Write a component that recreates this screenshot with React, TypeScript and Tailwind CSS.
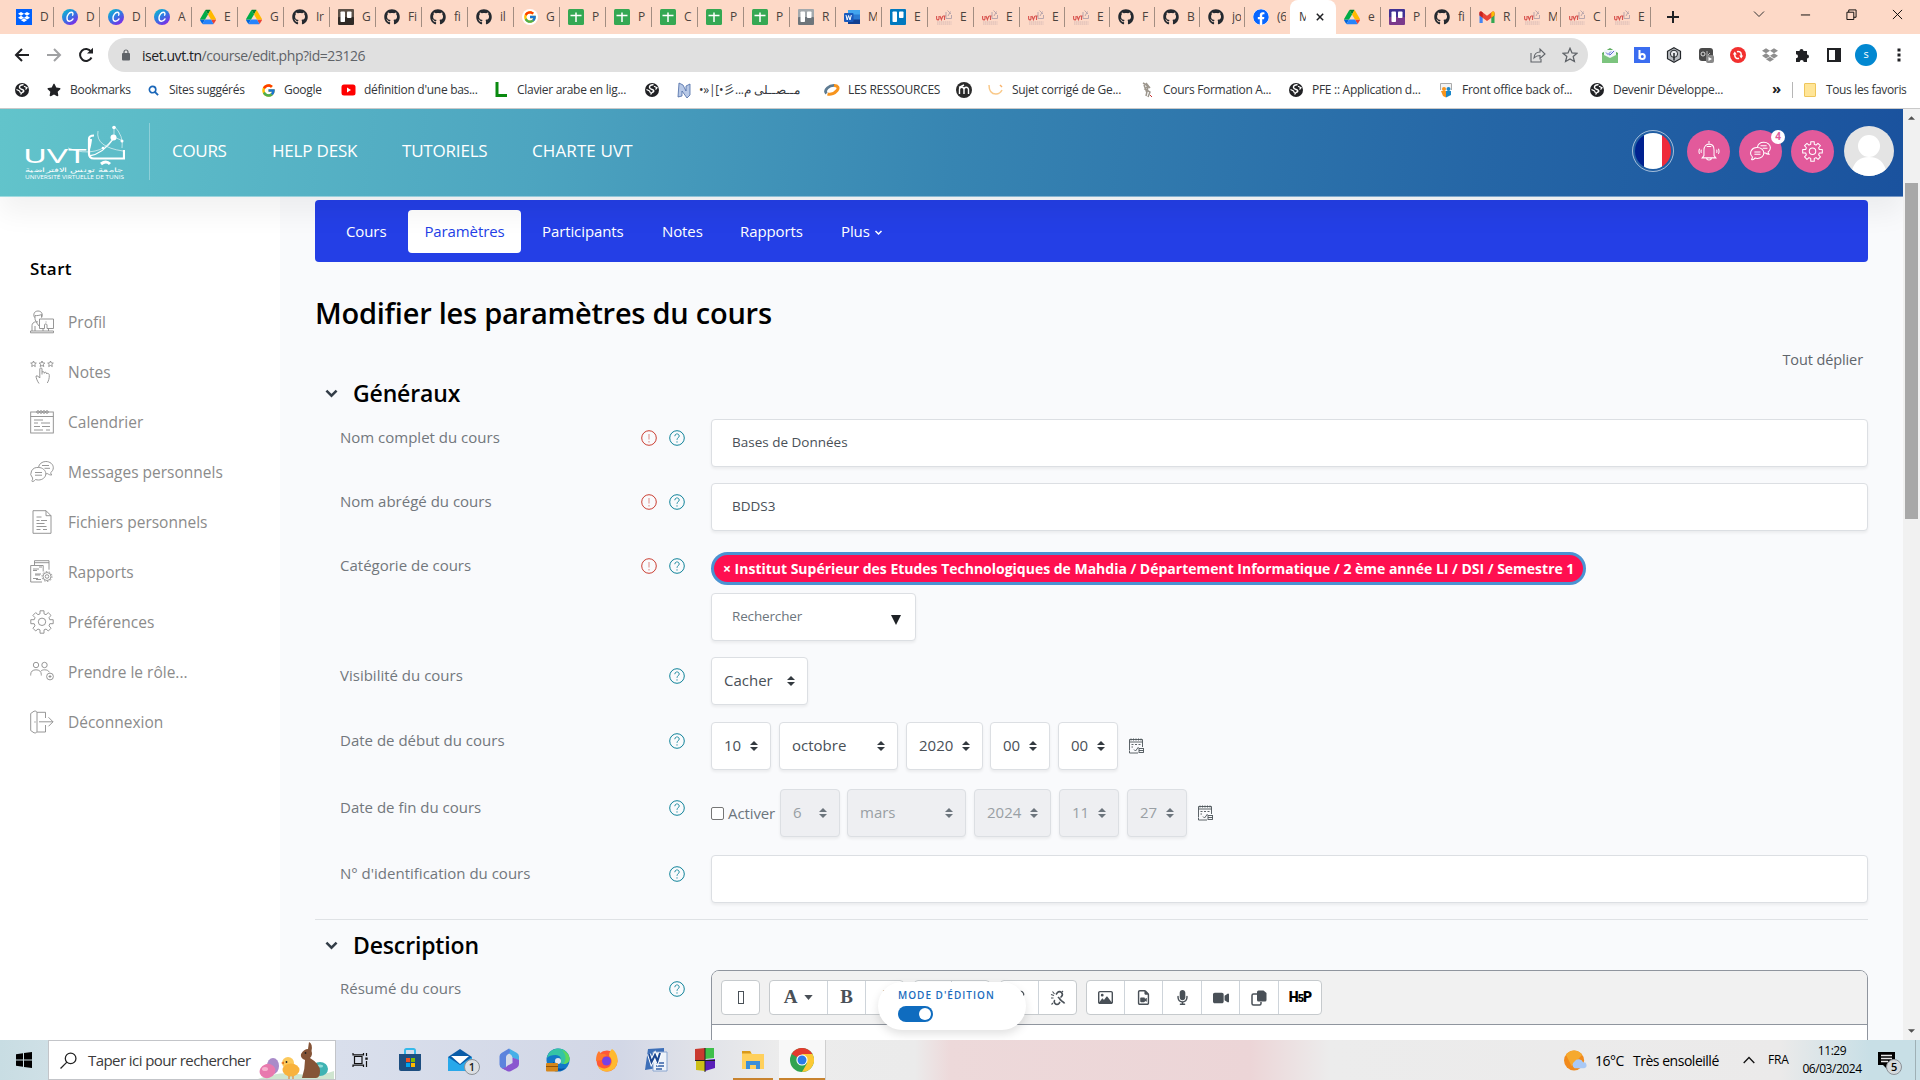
import React from "react";
import { FcGoogle } from "react-icons/fc";
import { FaGithub, FaDropbox, FaFacebook, FaStar, FaPuzzlePiece } from "react-icons/fa";
import { FaRegImage, FaRegFileVideo, FaMicrophone, FaVideo } from "react-icons/fa6";

/* ---------- favicons ---------- */
const Dropbox = () => (
  <span className="flex size-4 items-center justify-center bg-[#0061fe]">
    <FaDropbox className="size-3 text-white" />
  </span>
);
const Canva = () => (
  <svg viewBox="0 0 16 16" className="size-4">
    <defs>
      <linearGradient id="cv" x1="0" y1="0" x2="0.7" y2="1">
        <stop offset="0" stopColor="#08c3cc" />
        <stop offset="0.5" stopColor="#2c7fe0" />
        <stop offset="1" stopColor="#7d2ae8" />
      </linearGradient>
    </defs>
    <circle cx="8" cy="8" r="8" fill="url(#cv)" />
    <path d="M10.600 6.200c.9-1.800.1-2.900-1.300-2.900-2.100 0-4.300 3-4.300 5.700 0 2.100 1 3.300 2.500 3.300 1.300 0 2.700-1 3.500-2.400" fill="none" stroke="#fff" strokeWidth="1.400" strokeLinecap="round" />
  </svg>
);
const Drive = () => (
  <svg viewBox="0 0 87 78" className="size-4">
    <path d="M6.600 66.900 10.400 73.400c.8 1.400 1.900 2.500 3.300 3.300L27.500 53H0c0 1.500.4 3.100 1.200 4.500z" fill="#0066da" />
    <path d="M43.600 25 29.900 1.200c-1.300.8-2.500 1.900-3.300 3.300L1.200 48.500C.4 49.900 0 51.400 0 53h27.500z" fill="#00ac47" />
    <path d="M73.500 76.800c1.400-.8 2.500-1.900 3.300-3.300l1.600-2.800L86.100 57.500c.8-1.400 1.200-3 1.200-4.500H59.800l5.900 11.500z" fill="#ea4335" />
    <path d="M43.600 25 57.400 1.200C56 .4 54.400 0 52.900 0H34.400c-1.600 0-3.200.5-4.500 1.200z" fill="#00832d" />
    <path d="M59.800 53H27.500L13.700 76.800c1.400.8 2.900 1.200 4.500 1.200h50.900c1.600 0 3.200-.5 4.500-1.200z" fill="#2684fc" />
    <path d="M73.400 26.500 60.700 4.500c-.8-1.400-2-2.500-3.300-3.300L43.600 25l16.200 28h27.500c0-1.600-.4-3.100-1.200-4.500z" fill="#ffba00" />
  </svg>
);
const Github = () => <FaGithub className="size-4 text-[#24292f]" />;
const Google = () => (
  <span className="flex size-4 items-center justify-center rounded-full bg-white">
    <FcGoogle className="size-[14px]" />
  </span>
);
const Sheet = () => (
  <svg viewBox="0 0 16 16" className="size-4">
    <rect width="16" height="16" rx="1.500" fill="#34a853" />
    <path d="M8 3.500V13M2.500 6.500h11" stroke="#fff" strokeWidth="1.500" />
  </svg>
);
const Board = ({ a, b }: { a: string; b: string }) => (
  <svg viewBox="0 0 16 16" className="size-4">
    <rect width="16" height="10" rx="1" fill={a} />
    <rect y="8" width="16" height="8" rx="1" fill={b} />
    <rect x="2.500" y="2.500" width="4.500" height="10.500" rx=".8" fill="#fff" />
    <rect x="9" y="2.500" width="4.500" height="6.500" rx=".8" fill="#fff" />
  </svg>
);
const Word = () => (
  <svg viewBox="0 0 16 16" className="size-4">
    <rect x="4" y="1" width="12" height="14" rx="1" fill="#2b7cd3" />
    <rect x="4" y="1" width="12" height="4.500" fill="#41a5ee" />
    <rect x="4" y="10.500" width="12" height="4.500" fill="#103f91" />
    <rect y="4" width="9.500" height="9" rx="1" fill="#185abd" />
    <path d="M2 6l1.200 5 1.400-4.500L6 11l1.300-5" fill="none" stroke="#fff" strokeWidth="1" />
  </svg>
);
const Uvt = () => (
  <svg viewBox="0 0 16 16" className="size-4">
    <path d="M.6 7v2.600q0 1.300 1.200 1.300T3 9.600V7M4 7l1.400 3.700L6.800 7M7 7h3M8.500 7v4" fill="none" stroke="#d9544f" strokeWidth="1.100" />
    <path d="M10 3v6.500h5.500V6M12 7l2.500-4.500M11.500 1.500 15 5" fill="none" stroke="#b9a6ac" strokeWidth="1" />
    <path d="M1 13h14.500M1 15h14.500" stroke="#c9b0b0" strokeWidth=".8" strokeDasharray="1.500 .5" />
  </svg>
);
const Gmail = () => (
  <svg viewBox="0 0 16 16" className="size-4">
    <path d="M.5 4v10h3.200V7z" fill="#4285f4" />
    <path d="M15.500 4v10h-3.200V7z" fill="#34a853" />
    <path d="M.5 4.500v2L8 12l7.500-5.500V3.800c0-1.300-1.300-1.800-2.300-1L8 6.700 2.800 2.800C1.800 2 .5 2.500.5 3.800z" fill="#ea4335" />
    <path d="M12.300 3.500v5l3.200-2.300V3.800c0-1.300-1.300-1.800-2.300-1z" fill="#fbbc04" />
    <path d="M.5 4v2.200l3.200 2.300v-5L2.800 2.800C1.800 2 .5 2.500.5 3.800z" fill="#c5221f" />
  </svg>
);
const Facebook = () => <FaFacebook className="size-4 rounded-full bg-white text-[#0866ff]" />;

const icons = {
  dropbox: <Dropbox />,
  canva: <Canva />,
  drive: <Drive />,
  github: <Github />,
  google: <Google />,
  sheet: <Sheet />,
  boardDark: <Board a="#5c5148" b="#2f2a26" />,
  boardGray: <Board a="#a3a9ad" b="#6d757b" />,
  boardBlue: <Board a="#0079bf" b="#0079bf" />,
  boardPurple: <Board a="#403294" b="#7a3a8c" />,
  word: <Word />,
  uvt: <Uvt />,
  gmail: <Gmail />,
  facebook: <Facebook />,
};
type IconName = keyof typeof icons;

const tabsA: [IconName, string][] = [
  ["dropbox", "D"], ["canva", "D"], ["canva", "D"], ["canva", "A"], ["drive", "E"], ["drive", "G"],
  ["github", "Ir"], ["boardDark", "G"], ["github", "Fi"], ["github", "fi"], ["github", "il"],
  ["google", "G"], ["sheet", "P"], ["sheet", "P"], ["sheet", "C"], ["sheet", "P"], ["sheet", "P"],
  ["boardGray", "R"], ["word", "M"], ["boardBlue", "E"], ["uvt", "E"], ["uvt", "E"],
];
const tabsB: [IconName, string][] = [
  ["uvt", "E"], ["uvt", "E"], ["github", "F"], ["github", "B"], ["github", "jo"], ["facebook", "(6"],
];
const tabsC: [IconName, string][] = [
  ["drive", "e"], ["boardPurple", "P"], ["github", "fi"], ["gmail", "R"], ["uvt", "M"], ["uvt", "C"], ["uvt", "E"],
];

const Tab = ({ icon, label, narrow, last }: { icon: IconName; label: string; narrow?: boolean; last?: boolean }) => (
  <div className={"flex h-[20px] shrink-0 items-center pl-[8px] " + (narrow ? "w-[45px] " : "w-[46px] ") + (last ? "" : "border-r border-[#a28d81]")}>
    {icons[icon]}
    <span className="ml-[8px] w-[9px] overflow-hidden text-[12px] tracking-[-0.3px] whitespace-nowrap text-[#4b423d]">{label}</span>
  </div>
);

const TabStrip = () => (
  <div className="flex h-[34px] items-center bg-[#fdd9c7] pl-[8px]">
    {tabsA.map(([i, l], k) => <Tab key={k} icon={i} label={l} />)}
    {tabsB.map(([i, l], k) => <Tab key={k} icon={i} label={l} narrow last={k === 5} />)}
    <div className="flex h-[34px] w-[46px] items-center rounded-t-[8px] bg-white pl-[9px]">
      <span className="w-[7px] overflow-hidden text-[12px] text-[#3c3c3c]">M</span>
      <svg viewBox="0 0 8 8" className="ml-[10px] size-[8px]"><path d="M.8.8l6.400 6.400M7.200.8.8 7.200" stroke="#202124" strokeWidth="1.500" /></svg>
    </div>
    {tabsC.map(([i, l], k) => <Tab key={k} icon={i} label={l} narrow />)}
    <svg viewBox="0 0 14 14" className="ml-[15px] size-[14px]"><path d="M7 1v12M1 7h12" stroke="#202124" strokeWidth="2" /></svg>
    <div className="mb-[6px] ml-auto flex items-center gap-[35px] pr-[17px]">
      <svg viewBox="0 0 12 12" className="size-[12px]"><path d="M1 3.500l5 5 5-5" fill="none" stroke="#333" /></svg>
      <svg viewBox="0 0 12 12" className="size-[11px]"><path d="M1 6.500h10" stroke="#000" /></svg>
      <svg viewBox="0 0 12 12" className="size-[11px]"><path d="M1 3.500h7.500v8H1zM3 3.500V1h8v8H8.500" fill="none" stroke="#000" /></svg>
      <svg viewBox="0 0 12 12" className="size-[11px]"><path d="M1 1l10 10M11 1L1 11" stroke="#000" /></svg>
    </div>
  </div>
);

/* ---------- toolbar ---------- */
const Toolbar = () => (
  <div className="flex h-[42px] items-center pl-[14px]">
    <svg viewBox="0 0 16 16" className="size-[16px]"><path d="M15 8H2M8 2L2 8l6 6" fill="none" stroke="#202124" strokeWidth="2" /></svg>
    <svg viewBox="0 0 16 16" className="ml-[16px] size-[16px]"><path d="M1 8h13M8 2l6 6-6 6" fill="none" stroke="#a0a1a3" strokeWidth="2" /></svg>
    <svg viewBox="0 0 16 16" className="ml-[16px] size-[16px]"><path d="M13.500 10.500A6 6 0 1 1 13 4.500" fill="none" stroke="#202124" strokeWidth="2" /><path d="M9 6.500h6V.8z" fill="#202124" /></svg>
    <div className="ml-[14px] flex h-[34px] w-[1480px] items-center rounded-full bg-[#e0e0e0] pl-[13px]">
      <svg viewBox="0 0 10 12" className="h-[12px] w-[10px]"><rect x="1" y="4" width="8" height="7.500" rx="1" fill="#5f6368" /><path d="M3 5V3a2 2 0 0 1 4 0v2" fill="none" stroke="#5f6368" strokeWidth="1.200" /></svg>
      <span className="ml-[11px] text-[14px] tracking-[-0.45px] text-[#5f6368]"><span className="text-[#202124]">iset.uvt.tn</span>/course/edit.php?id=23126</span>
      <div className="ml-auto flex gap-[16px] pr-[10px]">
        <svg viewBox="0 0 16 16" className="size-[16px]"><path d="M1 6v9h10v-3M4 11c.3-4 3-6 6-6V2l5 5-5 4.500V8.500c-3 0-4.500.8-6 2.500z" fill="none" stroke="#5f6368" strokeWidth="1.100" /></svg>
        <svg viewBox="0 0 16 16" className="size-[16px]"><path d="M8 1.300l2 4.600 5 .4-3.800 3.300 1.200 4.900L8 11.900l-4.400 2.600 1.200-4.900L1 6.300l5-.4z" fill="none" stroke="#5f6368" strokeWidth="1.300" /></svg>
      </div>
    </div>
    <div className="ml-[14px] flex items-center gap-[16px]">
      <svg viewBox="0 0 16 16" className="size-[16px]"><path d="M0 6l8-5 8 5v9H0z" fill="#5fae61" /><path d="M2 3h12v6l-6 3-6-3z" fill="#f1f5f9" /><path d="M4 5.500l2 2 3-3M7 7.500l1 .500 4-4" fill="none" stroke="#5a63d8" /><path d="M0 7l8 4 8-4v9H0z" fill="#7cc47e" /></svg>
      <svg viewBox="0 0 16 16" className="size-[16px]"><rect width="16" height="16" fill="#3b6df0" /><path d="M5.500 3v9" stroke="#fff" strokeWidth="2" /><circle cx="8.300" cy="9.500" r="2.500" fill="none" stroke="#fff" strokeWidth="2" /></svg>
      <svg viewBox="0 0 16 16" className="size-[16px]"><path d="M8 .7l6.500 3.600v7.400L8 15.300 1.500 11.700V4.300z" fill="#b8bcc0" stroke="#22262a" strokeWidth="1.200" /><circle cx="8" cy="6.800" r="3.600" fill="#e8eaed" stroke="#22262a" /><path d="M8 6v7.500" stroke="#22262a" strokeWidth="1.500" /></svg>
      <svg viewBox="0 0 16 16" className="size-[16px]"><rect x="1" y="1" width="14" height="13" rx="3" fill="#4a4a4a" /><circle cx="5" cy="7" r="2" fill="none" stroke="#ddd" /><path d="M9 4v5l3-3" stroke="#bbb" fill="none" /><rect x="8" y="8" width="8" height="8" rx="2" fill="#888" /><path d="M10.500 10l3.500 2-3.500 2z" fill="#fff" /></svg>
      <svg viewBox="0 0 16 16" className="size-[16px]"><circle cx="8" cy="8" r="8" fill="#f2302f" /><path d="M4.800 7v1.500a3 3 0 0 0 4.200 2.800M11.200 9V7.500A3 3 0 0 0 7 4.700" fill="none" stroke="#fff" strokeWidth="1.500" /><path d="M2.800 7.500l2-3 2 3zM9.200 8.500l2 3 2-3z" fill="#fff" /></svg>
      <FaDropbox className="size-[16px] text-[#8e8e8e]" />
      <svg viewBox="0 0 16 16" className="size-[16px]"><path d="M2 4h3.500a2 2 0 1 1 4 0H13v3.500a2 2 0 1 1 0 4V15H9.700a2 2 0 1 0-4 0H2v-3.700a2 2 0 1 0 0-4z" fill="#202124" /></svg>
      <svg viewBox="0 0 16 16" className="size-[16px]"><rect x="2" y="2" width="12" height="12" fill="none" stroke="#202124" strokeWidth="2" /><rect x="9" y="2" width="5" height="12" fill="#202124" /></svg>
      <span className="-ml-[3px] flex size-[22px] items-center justify-center rounded-full bg-[#0288d1] pb-px text-[11px] text-white">s</span>
      <svg viewBox="0 0 4 14" className="ml-[4px] h-[14px] w-[4px]"><path d="M.5.5h3v3h-3zM.5 5.500h3v3h-3zM.5 10.500h3v3h-3z" fill="#202124" /></svg>
    </div>
  </div>
);

/* ---------- bookmarks ---------- */
const Globe = () => (
  <svg viewBox="0 0 14 14" className="size-[14px]">
    <circle cx="7" cy="7" r="7" fill="#202124" />
    <path d="M8.500 1.800C6 1.500 4.300 3 4.500 4.500S7 6.300 8 6.800s1 1.700 0 2.200-2 .8-2.200 2.500" fill="none" stroke="#fff" strokeWidth="1.500" />
    <path d="M1.500 6.500l3 1.500 1 2M9 3.300l3 1.500-1.500 1.700" fill="none" stroke="#fff" strokeWidth="1.200" />
  </svg>
);
const Mark = ({ w, icon, children }: { w: string; icon: React.ReactNode; children?: React.ReactNode }) => (
  <div className={"flex shrink-0 items-center " + w}>
    <span className="flex w-[16px] shrink-0 justify-center">{icon}</span>
    <span className="ml-[8px] text-[12px] tracking-[-0.29px] whitespace-nowrap text-[#33363a]">{children}</span>
  </div>
);
const Bookmarks = () => (
  <div className="flex h-[28px] items-center pl-[14px]">
    <Mark w="w-[32px]" icon={<Globe />} />
    <Mark w="w-[99px]" icon={<FaStar className="size-[14px] text-[#202124]" />}>Bookmarks</Mark>
    <Mark w="w-[115px]" icon={<svg viewBox="0 0 12 12" className="size-[11px]"><circle cx="5" cy="5" r="3.500" fill="none" stroke="#1a66b8" strokeWidth="1.800" /><path d="M7.500 7.500L11 11" stroke="#1a66b8" strokeWidth="2" /></svg>}>Sites suggérés</Mark>
    <Mark w="w-[80px]" icon={<FcGoogle className="size-[15px]" />}>Google</Mark>
    <Mark w="w-[153px]" icon={<svg viewBox="0 0 14 12" className="h-[12px] w-[15px]"><rect width="14" height="11" y=".5" rx="2.500" fill="#f00" /><path d="M5.500 3.500v5l4-2.500z" fill="#fff" /></svg>}>définition d&apos;une bas...</Mark>
    <Mark w="w-[151px]" icon={<svg viewBox="0 0 12 16" className="h-[16px] w-[12px]"><path d="M2 0v13.500h10" fill="none" stroke="#0a8a10" strokeWidth="3" /></svg>}>Clavier arabe en lig...</Mark>
    <Mark w="w-[32px]" icon={<Globe />} />
    <div className="flex w-[148px] shrink-0 items-center">
      <svg viewBox="0 0 16 16" className="size-[16px]"><path d="M3 1l4 2 3 6V4l4-2v11l-3 3-5-7v5l-4 1z" fill="#b7c8e6" stroke="#4a69a5" strokeWidth=".8" /></svg>
      <span dir="ltr" className="ml-[7px] text-[12px] tracking-[-0.25px] whitespace-nowrap text-[#33363a]">•»|[•彡...مــصــلى م</span>
    </div>
    <Mark w="w-[132px]" icon={<svg viewBox="0 0 16 16" className="size-[16px]"><path d="M2.500 11.500C-.5 8 5 3 11 3.500" fill="none" stroke="#5d7b92" strokeWidth="2.800" /><path d="M10 3.500c4 0 5 2.500 3 5s-6 4.500-9.500 3.500" fill="none" stroke="#f7941d" strokeWidth="3" /></svg>}>LES RESSOURCES</Mark>
    <Mark w="w-[32px]" icon={<svg viewBox="0 0 16 16" className="size-[16px]"><circle cx="8" cy="8" r="8" fill="#2b2b2b" /><path d="M3.500 12V7.500a2.200 2.200 0 0 1 4.500 0V12M8 7.500a2.200 2.200 0 0 1 4.500 0V12M3 5.500l5-2.500" fill="none" stroke="#fff" strokeWidth="1.400" /></svg>} />
    <Mark w="w-[151px]" icon={<svg viewBox="0 0 16 16" className="size-[16px]"><path d="M1 3c0 6 3 9 7 9 3 0 5-2 6-4" fill="none" stroke="#f9c98a" strokeWidth="1.500" /><path d="M12 3l2 2" stroke="#f9b26a" strokeWidth="1.500" /></svg>}>Sujet corrigé de Ge...</Mark>
    <Mark w="w-[149px]" icon={<svg viewBox="0 0 16 16" className="size-[16px]"><path d="M4 1l5 3-3 3 5 3-2 5M7 1l4 5M5 3l3 8M9 5l-2 9" fill="none" stroke="#9c968d" strokeWidth="1.500" /><path d="M11 13l2 2" stroke="#c33" /></svg>}>Cours Formation A...</Mark>
    <Mark w="w-[150px]" icon={<Globe />}>PFE :: Application d...</Mark>
    <Mark w="w-[151px]" icon={<svg viewBox="0 0 16 16" className="size-[16px]"><path d="M2.500 8V1.500h11V8" fill="#f3f3f3" stroke="#aaa" /><circle cx="6" cy="7" r="2" fill="#f7941d" /><circle cx="10.500" cy="7" r="2" fill="#1b87c9" /><path d="M3 9h5v6.500L5 14z" fill="#f7941d" /><path d="M8 9h5v4l-5 2.500z" fill="#1b87c9" /></svg>}>Front office back of...</Mark>
    <Mark w="w-[184px]" icon={<Globe />}>Devenir Développe...</Mark>
    <span className="-mt-[3px] -ml-px w-[20px] text-[15px] font-bold text-[#202124]">»</span>
    <span className="h-[16px] w-px bg-[#b6b6b6]" />
    <span className="ml-[11px] h-[14px] w-[12px] rounded-[1px] border border-[#eec65c] bg-[#ffe597]" />
    <span className="ml-[10px] text-[12px] tracking-[-0.36px] whitespace-nowrap text-[#33363a]">Tous les favoris</span>
  </div>
);

/* ---------- thin line icons ---------- */
const Line = ({ children, size = "size-[24px]" }: { children: React.ReactNode; size?: string }) => (
  <svg viewBox="0 0 24 24" className={size + " shrink-0"} fill="none" stroke="currentColor" strokeWidth="0.9">{children}</svg>
);
const gearPath =
  "M10 .8h4v3l2 .9 2.200-2.100 2.800 2.800L19 7.700l.8 2h3.400v4h-3.400l-.8 2.200 2.100 2.300-2.800 2.800-2.300-2-2 .9v3.300h-4v-3.300l-2-.9-2.300 2-2.800-2.800L5 15.900l-.8-2.200H.8v-4h3.400l.8-2L2.900 5.400l2.800-2.800L8 4.700l2-.9z";
const Gear = ({ size }: { size?: string }) => <Line size={size}><path d={gearPath} strokeLinejoin="round" /><circle cx="12" cy="11.800" r="3.700" /></Line>;
const Chats = ({ size }: { size?: string }) => (
  <Line size={size}>
    <path d="M3 21.500c-1 .1-1.500-.3-1-1 .6-.7.800-1.600.6-2.500A7 6.300 0 0 1 8.500 7.500c4 0 7.300 2.800 7.300 6.300s-3.300 6.200-7.300 6.200c-1 0-2-.1-2.900-.5-.8.900-1.600 1.600-2.600 2z" />
    <path d="M8.500 7.300C9 4 12 1.500 15.800 1.500c4.200 0 7.500 2.700 7.500 6.200 0 2-1 3.700-2.600 4.900 0 1 .4 1.700 1 2.400-1.500.1-2.900-.4-3.900-1.300l-2 .1" />
    <path d="M5 12.500h7M5 15.200h7M12 5.500h7M14.500 8.300h5.500" />
  </Line>
);
const sideIcons = [
  <Line key="p"><path d="M4.500 7.500C2.800 4 4.500 1 8 1s5.200 3 3.700 6.500M4.800 5.500c2 .3 4.800 0 6.700-1v3M5 6v2.500c0 2 1.300 3.500 3 3.500M2 21v-5.500c0-2 1.500-3.300 3.800-3.800L9 16M9.500 9h14v9.500H17v-3.500c0-1.500-2.500-1.500-2.500 0v3.500H9.500zM.5 21h23v1.800H.5zM5 16v5M16 11.500v1M13 18.500V21M18.500 18.500V21" /></Line>,
  <Line key="n"><path d="M3.500 1l.8 1.900 2 .2-1.500 1.400.5 2-1.800-1-1.800 1 .5-2L.7 3.100l2-.2zM12 1l.8 1.900 2 .2-1.500 1.400.5 2-1.800-1-1.800 1 .5-2-1.500-1.400 2-.2zM20.500 1l.8 1.900 2 .2-1.500 1.400.5 2-1.800-1-1.800 1 .5-2-1.500-1.400 2-.2z" /><path d="M9 23.500c-1.500-2-3-5.500-3-7.500 1.500-.5 2.500.5 3.800 2V9c0-1.500 2.200-1.500 2.200 0v5.500M12 12c1.500-1 2.300 0 2.300 1.500M14.300 12.500c1.500-.7 2.400 0 2.400 1.500M16.700 13.500c1.500-.5 2.600.3 2.600 2 0 3-.6 5-2 7.500" /></Line>,
  <Line key="c"><rect x=".7" y="2" width="22.600" height="21" /><path d="M.7 6.500h22.600M4 10h9M11 13h9M4 13h4M4 16.500h6M12 16.500h8M4 20h9M16 20h4" /><circle cx="8" cy="2" r="1.300" /><circle cx="11" cy="2" r="1.300" /><circle cx="14" cy="2" r="1.300" /><circle cx="17" cy="2" r="1.300" /></Line>,
  <Chats key="m" />,
  <Line key="f"><path d="M3 .7h13l5 5v17.600H3zM16 .7v5h5M6.500 7h5M6.500 10.500h3M11 10.500h6M6.500 13.500h8M6.500 16.500h10M6.500 19.500h4M13 19.500h4" /></Line>,
  <Line key="r"><path d="M4.500 5V.7h14.500v9M4.500 2.700h14.500M.7 5.500h12.500v6M12 22H.7V5.500M3 9h6M3 10.500h4M9 7h3M5 14h6M5 15h5M3 18.500h5M6 19.500h5" /><circle cx="17" cy="16.500" r="4" /><circle cx="17" cy="16.500" r="1.800" /><circle cx="17" cy="16.500" r="5" strokeDasharray="1.500 1.600" /></Line>,
  <Gear key="g" />,
  <Line key="u"><circle cx="6" cy="5" r="2.700" /><circle cx="14.500" cy="5" r="2.700" /><path d="M.7 15.500v-1c0-3 2-4.700 5.300-4.700s5.300 1.700 5.300 4.700v1M11 11c1-.9 2.200-1.200 3.500-1.200 2.500 0 4 .8 4.800 2.400" /><circle cx="20" cy="16.500" r="3.400" /><path d="M20 15v3M18.500 16.500h3" /></Line>,
  <Line key="d"><path d="M.7 3.500 4 1.200C6 .7 7 1.500 7 3v18c0 1.500-1 2.300-3 1.800L.7 20.500zM7 2.300h8.500V8M15.500 15v7H7M5 11.300v1.400M9 11.800h14M18.500 7.300l4.500 4.500-4.500 4.500" /></Line>,
];
const sideLabels = ["Profil", "Notes", "Calendrier", "Messages personnels", "Fichiers personnels", "Rapports", "Préférences", "Prendre le rôle...", "Déconnexion"];

/* ---------- site header ---------- */
const Logo = () => (
  <svg viewBox="0 0 100 58" className="h-[58px] w-[100px] shrink-0" fill="none" stroke="#fff">
    <text x="-1.500" y="41" textLength="63" lengthAdjust="spacingAndGlyphs" fill="#fff" stroke="none" className="font-['Lato'] text-[19px]">UVT</text>
    <path d="M69 13.500q-5 0-5 3.500v14.500q0 5 5 5h30V28M64 27q1-3 2-10" strokeWidth="2.200" />
    <path d="M76 42q5-4 9 0" strokeWidth="3" />
    <path d="M43 26q15 6 27 3 11-2 18-13M73 9q-3 16 25 20M89 4q10 10 8 22M89 6v9l9 4" strokeWidth=".6" />
    <path d="M64 34q14-2 25-18" strokeWidth="1.300" />
    <circle cx="89" cy="5.500" r="1.800" fill="#fff" stroke="none" /><circle cx="88.500" cy="15.500" r="3" fill="#fff" stroke="none" /><circle cx="97" cy="19" r="1.500" fill="#fff" stroke="none" /><circle cx="78" cy="26" r="1.300" fill="#fff" stroke="none" />
    <text x="0" y="50" textLength="99" lengthAdjust="spacingAndGlyphs" fill="#fff" stroke="none" className="text-[5.500px]">جامعة تونس الافتراضية</text>
    <text x="0" y="56.500" textLength="99" lengthAdjust="spacingAndGlyphs" fill="#fff" stroke="none" className="text-[5px]">UNIVERSITÉ VIRTUELLE DE TUNIS</text>
  </svg>
);

const SiteHeader = () => (
  <header className="relative z-10 flex h-[88px] w-[1903px] shrink-0 items-center border-b border-white/40 bg-[linear-gradient(97deg,#62c4cb_0%,#4da5c0_28%,#3785b2_50%,#2566a6_78%,#1a529e_100%)] pr-[9px] pb-[3px] pl-[25px] shadow-[0_16px_26px_rgba(0,0,0,0.055)]">
    <Logo />
    <span className="ml-[24px] h-[57px] w-px bg-white/30" />
    <nav className="ml-[22px] flex text-[17px] tracking-[0.05px] whitespace-nowrap text-white">
      <a className="w-[100px] tracking-[-0.3px]">COURS</a>
      <a className="w-[130px] tracking-[-0.2px]">HELP DESK</a>
      <a className="w-[130px] tracking-[-0.2px]">TUTORIELS</a>
      <a className="tracking-[0.1px]">CHARTE UVT</a>
    </nav>
    <div className="ml-auto flex items-center">
      <span className="flex size-[42px] items-center justify-center rounded-full border border-white/60">
        <span className="flex size-[36px] overflow-hidden rounded-full">
          <i className="w-[9px] bg-[#00218f]" /><i className="w-[18px] bg-white" /><i className="w-[9px] bg-[#ef2b3b]" />
        </span>
      </span>
      <span className="ml-[13px] flex size-[43px] items-center justify-center rounded-full bg-[#e25a9b] text-white">
        <Line size="size-[22px]"><path d="M12 1v2.500M6.500 17v-6c0-4 2.300-6.500 5.500-6.500s5.500 2.500 5.500 6.500v6l2 2.500h-15zM9.500 20c0 2.500 5 2.500 5 0M9.500 7h5M3.700 10.500c-.5 1.200-.5 2.400 0 3.600M1.700 9.500c-.9 1.900-.9 3.700 0 5.600M20.300 10.500c.5 1.200.5 2.400 0 3.600M22.300 9.500c.9 1.900.9 3.700 0 5.600" strokeWidth="1.100" /></Line>
      </span>
      <span className="relative ml-[9px] flex size-[43px] items-center justify-center rounded-full bg-[#e25a9b] text-white [&_svg]:stroke-[1.2]">
        <Chats size="size-[21px]" />
        <b className="absolute top-0 left-[32px] flex size-[14px] items-center justify-center rounded-full bg-white text-[10px] text-[#e25a9b]">4</b>
      </span>
      <span className="ml-[9px] flex size-[43px] items-center justify-center rounded-full bg-[#e25a9b] text-white [&_svg]:stroke-[1.2]">
        <Gear size="size-[21px]" />
      </span>
      <svg viewBox="0 0 50 50" className="ml-[10px] size-[50px] rounded-full bg-[#e4e4e4]"><circle cx="25" cy="20" r="11" fill="#fff" /><path d="M8 44q4-13 17-13t17 13v8H8z" fill="#fff" /></svg>
    </div>
  </header>
);

const Sidebar = () => (
  <aside className="w-[280px] shrink-0 bg-white pl-[30px] shadow-[1px_0_3px_rgba(0,0,0,0.06)]">
    <h2 className="mt-[60px] h-[24px] text-[17px] leading-[24px] font-semibold tracking-[0.4px] text-black">Start</h2>
    <ul className="mt-[16px]">
      {sideLabels.map((l, i) => (
        <li key={l} className="flex h-[50px] items-center gap-[14px] text-[15.500px] text-[#8b8b8b]">{sideIcons[i]}<span className="mt-px">{l}</span></li>
      ))}
    </ul>
  </aside>
);

/* ---------- form ---------- */
const Bang = () => <svg viewBox="0 0 16 16" className="size-[16px]" fill="none" stroke="#cb3f33"><circle cx="8" cy="8" r="7.300" /><path d="M8 4v5.500M8 11v1.500" strokeWidth=".6" /></svg>;
const Help = () => <svg viewBox="0 0 16 16" className="size-[16px]" fill="none" stroke="#0f8299"><circle cx="8" cy="8" r="7.300" /><path d="M5.800 6.200c0-3 4.400-3 4.400-.2C10.200 7.700 8 7.800 8 9.800M8 11.300v1.300" strokeWidth=".9" /></svg>;
const Chevron = () => <svg viewBox="0 0 12 8" className="h-[9px] w-[13px]"><path d="M1.300 1.300L6 6l4.700-4.700" fill="none" stroke="#333d47" strokeWidth="2.300" /></svg>;

const Row = ({ label, required, h, children }: { label: string; required?: boolean; h: string; children: React.ReactNode }) => (
  <div className={"flex items-start pl-[25px] " + h}>
    <span className="w-[301px] pt-[7px] text-[15px] leading-[22px] text-[#72777c]">{label}</span>
    <span className="flex w-[70px] justify-between pt-[11px] pr-[26px]">
      {required ? <Bang /> : <i />}
      <Help />
    </span>
    <div className="w-[1157px]">{children}</div>
  </div>
);
const box = "h-[48px] rounded-[4px] border border-[#dcdfe3] shadow-[0_2px_3px_rgba(0,0,0,0.06)] ";
const Input = ({ value }: { value?: string }) => (
  <div className={box + "flex items-center bg-white px-[20px] pb-[1px] text-[13.500px] text-[#495057]"}>{value}</div>
);
const Select = ({ w, value, off }: { w: string; value: string; off?: boolean }) => (
  <div className={box + w + " flex shrink-0 items-center justify-between pr-[12px] pb-px pl-[12px] text-[15px] " + (off ? "bg-[#eeeff2] text-[#999fa4]" : "bg-white text-[#495057]")}>
    <span>{value}</span>
    <svg viewBox="0 0 8 10" className="h-[10px] w-[8px]"><path d="M0 4l4-4 4 4zM0 6l4 4 4-4z" fill={off ? "#6c757d" : "#343a40"} /></svg>
  </div>
);
const CalIcon = () => (
  <svg viewBox="0 0 16 16" className="ml-[2px] size-[16px]" fill="none" stroke="#4b5258" strokeWidth=".9"><path d="M1.500 12V1.500h13V9M1.500 4h13M3 .5v2M5.500.5v2M8 .5v2M10.500.5v2M13 .5v2M1.500 12.500V15H10" /><path d="M3.500 6.500h2M7 6.500h2M10.500 6.500h2M3.500 9h1.500M6 11.500l1.500 1.500 3-4" /><rect x="11" y="10.500" width="4.500" height="4" /><path d="M11 12.500h4.500" /></svg>
);

const Section = ({ children, cls }: { children: React.ReactNode; cls: string }) => (
  <h3 className={"flex h-[30px] items-center gap-[15px] pl-[10px] text-[23px] font-semibold tracking-[-0.15px] text-black " + cls}>
    <Chevron />{children}
  </h3>
);

const Btn = ({ w = "w-[38px]", children }: { w?: string; children?: React.ReactNode }) => (
  <span className={"flex items-center justify-center " + w}>{children}</span>
);
const Unlink = () => (
  <svg viewBox="0 0 16 16" className="size-[16px]" fill="none" stroke="#495057" strokeWidth="1.600">
    <path d="M6 4.500l1.500-2c1-1.200 3-1.200 4 0s1 3 0 4l-1 1M8 7l3 3M9.500 9l1.500 1.500c1 1 3 1.500 3.500 3M10 12l-1 1.500c-1 1.200-3 1.200-4 0s-1-2.500-.3-3.500" />
    <path d="M1 4.500l3 1M2.500 1.500l2 2.500M1 8h2.500M13 1l-1 1M3 13l-1.500 1.500" strokeWidth="1.100" />
  </svg>
);
const Files = () => (
  <svg viewBox="0 0 16 16" className="size-[16px]"><path d="M6 4H2.500Q1 4 1 5.500v8Q1 15 2.500 15h6q1.500 0 1.500-1.500V12" fill="none" stroke="#495057" strokeWidth="1.500" /><path d="M7.500.5h5L15.500 3v7q0 1.500-1.500 1.500H7.500Q6 11.500 6 10V2Q6 .5 7.500.5z" fill="#495057" /></svg>
);
const group = "flex h-[35px] divide-x divide-[#ced4da] rounded-[4px] border border-[#c6cacd] bg-white text-[#495057] ";

const Editor = () => (
  <div className="h-[80px] rounded-t-[8px] border border-[#8f959e] bg-white">
    <div className="flex h-[54px] items-center rounded-t-[7px] border-b border-[#8f959e] bg-[#f1f1f1] pl-[9px] font-['Liberation_Serif']">
      <div className={group}><Btn w="w-[37px]"><i className="h-[13px] w-[6px] border border-[#495057]" /></Btn></div>
      <div className={group + "ml-[9px]"}>
        <Btn w="w-[58px]"><b className="text-[19px]">A</b><svg viewBox="0 0 10 6" className="ml-[7px] h-[5px] w-[9px]"><path d="M0 0h10L5 6z" fill="#495057" /></svg></Btn>
        <Btn><b className="text-[19px]">B</b></Btn>
        <Btn w="w-[37px]"><i className="text-[19px]">I</i></Btn>
      </div>
      <div className={group + "ml-[10px]"}><Btn w="w-[37px]" /><Btn w="w-[37px]" /></div>
      <div className={group + "ml-[10px]"}>
        <Btn><svg viewBox="0 0 16 16" className="size-[15px]" fill="none" stroke="#495057" strokeWidth="1.500"><path d="M6 4.500l1.500-2c1-1.200 3-1.200 4 0s1 3 0 4l-2 2M10 12l-1 1.500c-1 1.200-3 1.200-4 0s-1-3 0-4l3-3" /></svg></Btn>
        <Btn w="w-[37px]"><Unlink /></Btn>
      </div>
      <div className={group + "ml-[9px]"}>
        <Btn><FaRegImage className="size-[15px]" /></Btn>
        <Btn><FaRegFileVideo className="size-[15px]" /></Btn>
        <Btn w="w-[39px]"><FaMicrophone className="size-[15px]" /></Btn>
        <Btn><FaVideo className="size-[16px]" /></Btn>
        <Btn w="w-[39px]"><Files /></Btn>
        <Btn w="w-[42px]"><b className="flex items-center font-['Roboto'] text-[14px] font-black tracking-[-1px] text-black">H<span className="mt-[3px] text-[11px]">5</span>P</b></Btn>
      </div>
    </div>
  </div>
);

const navItem = "flex h-[43px] items-center rounded-[4px] ";
const Content = () => (
  <main className="relative w-[1623px] shrink-0 bg-[#f9fafc] pt-[3px] pr-[35px] pl-[35px]">
    <nav className="flex h-[62px] items-center rounded-[4px] bg-[#243fe6] pl-[31px] text-[15px] tracking-[-0.1px] text-white">
      <a className={navItem + "w-[62px]"}>Cours</a>
      <a className={navItem + "w-[113px] justify-center bg-white text-[#243fe6]"}>Paramètres</a>
      <a className={navItem + "w-[141px] pl-[21px]"}>Participants</a>
      <a className={navItem + "w-[78px]"}>Notes</a>
      <a className={navItem + "w-[101px]"}>Rapports</a>
      <a className={navItem + "gap-[4px]"}>Plus<svg viewBox="0 0 8 6" className="mt-[3px] h-[6px] w-[9px]"><path d="M1 1l3 3 3-3" fill="none" stroke="#fff" strokeWidth="1.500" /></svg></a>
    </nav>
    <h1 className="mt-[31px] text-[29px] leading-[40px] font-semibold tracking-[-0.24px] text-black">Modifier les paramètres du cours</h1>
    <div className="mt-[17px] flex h-[20px] items-center justify-end pr-[5px] text-[14.500px] tracking-[-0.1px] text-[#5f656b]">Tout déplier</div>
    <Section cls="mt-[8px]">Généraux</Section>
    <div className="mt-[11px]">
      <Row h="h-[64px]" label="Nom complet du cours" required><Input value="Bases de Données" /></Row>
      <Row h="h-[64px]" label="Nom abrégé du cours" required><Input value="BDDS3" /></Row>
      <Row h="h-[110px]" label="Catégorie de cours" required>
        <div className="mt-[5px] flex h-[33px] w-[875px] items-center rounded-full border-[3px] border-[#4a93d2] bg-[#ff0f50] pb-px pl-[9px] text-[14px] font-bold tracking-[-0.01px] whitespace-nowrap text-white">× Institut Supérieur des Etudes Technologiques de Mahdia / Département Informatique / 2 ème année LI / DSI / Semestre 1</div>
        <div className={box + "mt-[8px] flex w-[205px] items-center justify-between bg-white pr-[14px] pl-[20px] text-[13.500px] tracking-[-0.15px] text-[#6c757d]"}>
          <span className="mb-[2px]">Rechercher</span>
          <svg viewBox="0 0 11 11" className="mt-[5px] size-[10px]"><path d="M0 0h11L5.500 11z" fill="#1d2125" /></svg>
        </div>
      </Row>
      <Row h="h-[65px]" label="Visibilité du cours"><Select w="w-[97px]" value="Cacher" /></Row>
      <Row h="h-[67px]" label="Date de début du cours">
        <div className="flex items-center">
          <Select w="w-[60px] mr-[8px]" value="10" /><Select w="w-[119px] mr-[8px]" value="octobre" /><Select w="w-[77px] mr-[7px]" value="2020" /><Select w="w-[60px] mr-[8px]" value="00" /><Select w="w-[60px] mr-[8px]" value="00" /><CalIcon />
        </div>
      </Row>
      <Row h="h-[66px]" label="Date de fin du cours">
        <div className="flex items-center">
          <div className="flex w-[69px] items-center gap-[4px] text-[15px] tracking-[-0.1px] text-[#6c757d]"><i className="size-[13px] rounded-[2px] border border-[#767676] bg-white" />Activer</div>
          <Select off w="w-[60px] mr-[7px]" value="6" /><Select off w="w-[119px] mr-[8px]" value="mars" /><Select off w="w-[77px] mr-[8px]" value="2024" /><Select off w="w-[60px] mr-[8px]" value="11" /><Select off w="w-[60px] mr-[8px]" value="27" /><CalIcon />
        </div>
      </Row>
      <Row h="h-[64px]" label="N° d'identification du cours"><Input /></Row>
    </div>
    <hr className="border-[#dfe2e5]" />
    <Section cls="mt-[10px]">Description</Section>
    <div className="mt-[10px]"><Row h="h-[80px]" label="Résumé du cours"><Editor /></Row></div>
    <div className="absolute top-[785px] left-[598px] h-[48px] w-[148px] rounded-[24px] bg-white pt-[7px] pl-[20px] shadow-[0_4px_10px_rgba(0,0,0,0.12)]">
      <div className="text-[10px] leading-[12px] font-semibold tracking-[1px] whitespace-nowrap text-[#1a6cbd]">MODE D&apos;ÉDITION</div>
      <div className="mt-[5px] flex h-[16px] w-[35px] items-center justify-end rounded-full bg-[#0f6cbf] pr-[2px]"><i className="size-[12px] rounded-full bg-white" /></div>
    </div>
  </main>
);

/* ---------- taskbar ---------- */
const Slot = ({ children, w = "w-[49px]" }: { children: React.ReactNode; w?: string }) => (
  <span className={"relative flex h-[40px] shrink-0 items-center justify-center " + w}>{children}</span>
);
const Badge = ({ n }: { n: string }) => (
  <b className="absolute flex size-[16px] translate-x-[12px] translate-y-[7px] items-center justify-center rounded-full border border-[#8b9096] bg-[#dcdfe3] text-[11px] font-semibold text-[#222]">{n}</b>
);
const Taskbar = () => (
  <footer className="flex h-[40px] items-center bg-[linear-gradient(90deg,#c8dde3_0px,#cfe0e6_48px,#d9dfec_336px,#d2d7e6_620px,#dfe1e8_690px,#ececec_780px,#ebebeb_915px,#edd9da_950px,#ecd5d7_1250px,#ececec_1330px,#ebeaea_1780px,#c8dfe6_1870px)] text-black">
    <span className="flex w-[48px] justify-center"><svg viewBox="0 0 16 16" className="size-[16px]"><path d="M0 2.200l7-1v6.300H0zM8 1l8-1v7.500H8zM0 8.500h7v6.300l-7-1zM8 8.500h8V16l-8-1.100z" fill="#000" /></svg></span>
    <div className="flex h-[40px] w-[288px] items-center border border-[#c3c5c9] bg-white pl-[11px]">
      <svg viewBox="0 0 16 16" className="size-[17px]"><circle cx="10" cy="6" r="5" fill="none" stroke="#222" strokeWidth="1.200" /><path d="M6.500 9.500L.5 15.500" stroke="#222" strokeWidth="1.200" /></svg>
      <span className="ml-[11px] w-[170px] text-[15px] tracking-[-0.57px] whitespace-nowrap text-[#3b3b3b]">Taper ici pour rechercher</span>
      <svg viewBox="0 0 76 38" className="h-[38px] w-[76px] shrink-0">
        <path d="M0 38q20-8 40-5t36-3v8z" fill="#cfe5d0" />
        <ellipse cx="15" cy="25" rx="6" ry="8" fill="#a98bc9" /><ellipse cx="9.500" cy="30" rx="8" ry="7" fill="#e879ae" transform="rotate(-20 9.500 30)" /><ellipse cx="7" cy="28" rx="3" ry="2" fill="#f6b1cf" /><ellipse cx="62" cy="28" rx="8" ry="7" fill="#3fb3b3" /><ellipse cx="62" cy="25" rx="3" ry="1.500" fill="#8fdcd9" />
        <circle cx="30" cy="22" r="6" fill="#fcc95c" /><ellipse cx="33" cy="29" rx="8.500" ry="6.500" fill="#f8b23c" /><path d="M23 22l3-1.500v3z" fill="#e8761d" /><circle cx="28.500" cy="21" r=".9" fill="#222" /><path d="M31 35v3M35 35v3" stroke="#e8761d" />
        <path d="M43 13q3-5 7-5l1-7q4 2 2.500 9 1.500 4-1.500 7 10 6 10 13t-4 7H44q3-9 3-18-5-2-4-6z" fill="#855437" /><circle cx="47.500" cy="12" r=".9" fill="#222" />
      </svg>
    </div>
    <Slot w="w-[48px]"><svg viewBox="0 0 16 16" className="size-[16px]" fill="none" stroke="#111" strokeWidth="1.200"><path d="M2.500 4.500h7.500v7H2.500zM1 1v1.800h10.500V1M1 15v-1.800h10.500V15M14.500 1v3M14.500 9v6" /><path d="M13.300 5.500h2.400v2.300h-2.400z" fill="#111" stroke="none" /></svg></Slot>
    <Slot w="w-[52px]"><svg viewBox="0 0 24 24" className="size-[24px]"><path d="M1 6h22v15q0 2-2 2H3q-2 0-2-2z" fill="#1d4e80" /><path d="M7 6V2.500Q7 1 8.500 1h7Q17 1 17 2.500V6" fill="none" stroke="#35b9ea" strokeWidth="2" /><path d="M8 10h4v4H8z" fill="#f25022" /><path d="M13 10h4v4h-4z" fill="#7fba00" /><path d="M8 15h4v4H8z" fill="#00a4ef" /><path d="M13 15h4v4h-4z" fill="#ffb900" /></svg></Slot>
    <Slot w="w-[48px]"><svg viewBox="0 0 24 24" className="size-[24px]"><path d="M0 9l12-8 12 8v14H0z" fill="#0a5ca8" /><path d="M3 8h18l-9 8z" fill="#fff" /><path d="M0 9l12 8 12-8v14H0z" fill="#28a8ea" /></svg><Badge n="1" /></Slot>
    <Slot>
      <svg viewBox="0 0 22 24" className="h-[24px] w-[22px]">
        <path d="M11 .5L3.500 5Q1.500 6 1.500 8.500v8Q1.500 19 4 20.300l3 1.500q1-1 1-3V9q0-1.500 1.500-2.500L14 4z" fill="#5c83dd" />
        <path d="M11 .5l8 4.500q2 1 2 3.500V13l-6.500-3.500Q14 6.500 11 5.500 13 3 11 .5z" fill="#45b0e8" />
        <path d="M21 12v4q0 2.500-2 3.700L13 23q-2 1-4 0l-5.500-3Q8 20 9 18l5.500-3V9.500z" fill="#8a56cf" />
      </svg>
    </Slot>
    <Slot><svg viewBox="0 0 24 24" className="size-[24px]"><circle cx="12" cy="12" r="11.500" fill="#1378c8" /><path d="M1 10C2 4 7 .5 12 .5c7 0 11.500 5 11.500 10 0 4-3 5.500-6 5.500s-4-1-3-3 0-6-5-6c-4 0-7 1-8.500 3z" fill="#35c4a5" /><path d="M16 2c5 2 7.500 5 7.500 8.500 0 4-3 5.500-6 5.500 3-4 3-9-1.500-14z" fill="#5fd85c" /><circle cx="12" cy="13" r="3" fill="#dfe3ee" /><path d="M8 14c0 5 5 8 11 6-3 4-12 5-12-6z" fill="#0b4f9e" /><rect x="0" y="15" width="12" height="8.500" rx="1" fill="#d4861c" /><path d="M0 18.500h12" stroke="#8f5108" /></svg></Slot>
    <Slot><svg viewBox="0 0 24 24" className="size-[24px]"><circle cx="12" cy="13" r="10.500" fill="#ff5a36" /><path d="M22 8c2 7-1 15-10 15.500C7 23.500 4 21 3 18c4 3 8 3 11 1s4-8 0-11c0-4 2-6 3-7 3 2 4 4 5 7z" fill="#ffb92e" /><circle cx="11.500" cy="13" r="4.500" fill="#7542e5" /><path d="M1 13C1 8 2 5 4 3l2 3q4-1 6 2-5 0-5 4z" fill="#ff7a2f" /></svg></Slot>
    <Slot><svg viewBox="0 0 24 24" className="size-[24px]"><path d="M4 1l16-1v19L1 22z" fill="#3d6fb8" /><path d="M9 4h14v19H9z" fill="#eef3fa" stroke="#8aa5cf" /><path d="M12 15h8M12 18h8M12 21h6" stroke="#3561a8" strokeWidth="1.300" /><path d="M5 6l2.500 8L11 7l2.500 6L16 5" fill="none" stroke="#fff" strokeWidth="4" /><path d="M5 6l2.500 8L11 7l2.500 6L16 5" fill="none" stroke="#1b4690" strokeWidth="2" /></svg></Slot>
    <Slot><svg viewBox="0 0 24 24" className="size-[24px]"><path d="M2 1l10-1v12L2 13z" fill="#c93a30" /><path d="M12 0h9v10l-9 1z" fill="#3fbf4a" /><path d="M3 13l9-1v11l-9-1z" fill="#cdbf17" /><path d="M12 12l10-1v9l-10 3z" fill="#5a1fb8" /><path d="M12 0v24M2 12.500h20" stroke="#222" /></svg></Slot>
    <Slot w="w-[48px]"><svg viewBox="0 0 24 20" className="h-[20px] w-[24px]"><path d="M1 1h8l2 3h12v15H1z" fill="#ffd05c" /><path d="M1 1h8l1.500 2.500H1z" fill="#d99a1b" /><path d="M5 19v-8h14v8h-4v-4H9v4z" fill="#3b8fd8" /></svg><i className="absolute bottom-0 h-[2px] w-[40px] bg-[#c8832e]" /></Slot>
    <span className="relative ml-[2px] flex h-[40px] w-[47px] items-center justify-center border-r border-[#cfcfcf] bg-[#f8f8f8]">
      <svg viewBox="0 0 24 24" className="size-[24px]"><circle cx="12" cy="12" r="12" fill="#31a350" /><path d="M12 12L1.600 6A12 12 0 0 1 22.400 6H12z" fill="#e33b2e" /><path d="M12 24A12 12 0 0 0 22.400 6H12l5.200 9z" fill="#fcc934" /><circle cx="12" cy="12" r="5.600" fill="#fff" /><circle cx="12" cy="12" r="4.500" fill="#2c7be8" /></svg>
      <i className="absolute bottom-0 h-[2px] w-full bg-[#c8832e]" />
    </span>
    <div className="ml-auto flex h-[40px] items-center text-[14px] tracking-[-0.48px]">
      <svg viewBox="0 0 24 24" className="size-[23px]"><circle cx="10.500" cy="12" r="10.500" fill="#f18a1c" /><path d="M2 6A10.500 10.500 0 0 1 19 6L8 18z" fill="#f6a92e" /><path d="M11 20a4 4 0 0 1 0-7 5 5 0 0 1 9 1 3 3 0 0 1 1 6z" fill="#a9c9f6" /></svg>
      <span className="ml-[8px] w-[38px]">16°C</span>
      <span className="w-[110px] whitespace-nowrap">Très ensoleillé</span>
      <svg viewBox="0 0 12 8" className="h-[8px] w-[12px]"><path d="M.7 7L6 1.500 11.300 7" fill="none" stroke="#111" strokeWidth="1.300" /></svg>
      <span className="ml-[13px] w-[32px] text-[12px] tracking-[-0.2px]">FRA</span>
      <div className="w-[64px] text-center text-[12px] leading-[18px] tracking-[-0.45px]"><div>11:29</div><div>06/03/2024</div></div>
      <span className="relative ml-[14px] flex h-[40px] w-[38px] items-center border-r border-[#9fb0b5]">
        <svg viewBox="0 0 17 17" className="h-[17px] w-[17px]"><path d="M0 0h17v13H9v4l-4-4H0z" fill="#000" /><path d="M3 3.500h11M3 6.500h11M3 9.500h7" stroke="#e7e7e7" strokeWidth="1.300" /></svg>
        <b className="absolute top-[19px] left-[8px] flex size-[16px] items-center justify-center rounded-full border border-[#8b9096] bg-[#d5dadd] text-[11px] font-semibold">5</b>
      </span>
      <span className="w-[4px]" />
    </div>
  </footer>
);

export default function App() {
  return (
    <div className="h-[1080px] w-[1920px] overflow-hidden bg-white font-['Open_Sans','Noto_Sans','Noto_Sans_CJK_SC',sans-serif]">
      <TabStrip />
      <Toolbar />
      <div className="h-[33px] border-b border-[#c9c9c9]"><Bookmarks /></div>
      <div className="flex h-[931px]">
        <div className="flex w-[1903px] flex-col overflow-hidden">
          <SiteHeader />
          <div className="flex h-[843px]"><Sidebar /><Content /></div>
        </div>
        <div className="flex w-[17px] flex-col items-center bg-[#f1f1f1]">
          <svg viewBox="0 0 8 4" className="mt-[7px] h-[4px] w-[7px]"><path d="M0 4l4-4 4 4z" fill="#505050" /></svg>
          <span className="mt-[63px] h-[336px] w-[13px] bg-[#a8a8a8]" />
          <svg viewBox="0 0 8 4" className="mt-auto mb-[7px] h-[4px] w-[7px]"><path d="M0 0l4 4 4-4z" fill="#505050" /></svg>
        </div>
      </div>
      <Taskbar />
    </div>
  );
}
